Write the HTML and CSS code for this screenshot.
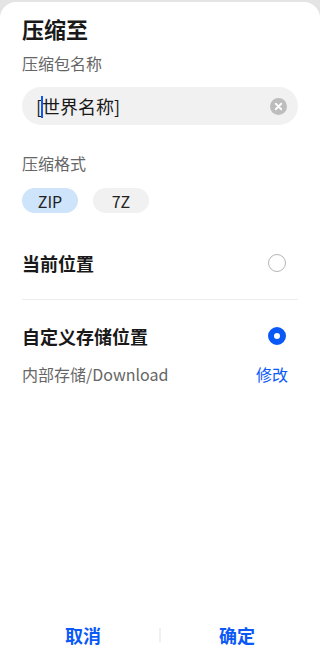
FILE: index.html
```html
<!DOCTYPE html>
<html lang="zh-CN">
<head>
  <meta charset="UTF-8">
  <title>压缩至</title>
  <link rel="stylesheet" href="styles.css">
</head>
<body>
  <div class="sheet">
    <h1 class="title">压缩至</h1>

    <div class="label">压缩包名称</div>
    <div class="name-input">
      <span class="name-text">[世界名称]</span>
      <svg class="clear" width="17" height="17" viewBox="0 0 16 16">
        <circle cx="8" cy="8" r="8" fill="#bdbdbd"/>
        <path d="M5.4 5.4 L10.6 10.6 M10.6 5.4 L5.4 10.6" stroke="#fff" stroke-width="1.7" stroke-linecap="round"/>
      </svg>
      <span class="caret"></span>
    </div>

    <div class="label format-label">压缩格式</div>
    <div class="chips">
      <span class="chip active">ZIP</span>
      <span class="chip">7Z</span>
    </div>

    <div class="option first">
      <span class="option-title">当前位置</span>
      <span class="radio"></span>
    </div>
    <div class="divider"></div>
    <div class="option">
      <span class="option-title">自定义存储位置</span>
      <span class="radio checked"></span>
    </div>
    <div class="path-row">
      <span class="path">内部存储/Download</span>
      <span class="edit">修改</span>
    </div>

    <div class="spacer"></div>

    <div class="actions">
      <button class="action">取消</button>
      <span class="action-divider"></span>
      <button class="action">确定</button>
    </div>
  </div>
</body>
</html>
```

FILE: styles.css
```css
html, body {
  margin: 0;
  padding: 0;
  height: 100%;
}

body {
  font-family: "Noto Sans CJK SC", "Noto Sans", sans-serif;
  background: #e4e4e4;
  padding-top: 2px;
  box-sizing: border-box;
}

.sheet {
  background: white;
  border-radius: 16px 16px 0 0;
  height: 663px;
  box-sizing: border-box;
  padding: 0 22px;
  display: flex;
  flex-direction: column;
}

.title {
  font-size: 22px;
  font-weight: bold;
  color: #191919;
  margin: 11px 0 0;
  line-height: 30px;
}

.label {
  font-size: 16px;
  color: #666;
  margin-top: 9px;
  line-height: 22px;
}

.name-input {
  margin-top: 13px;
  height: 38px;
  border-radius: 19px;
  background: #f1f1f1;
  display: flex;
  align-items: center;
  padding: 0 11px 0 14px;
  position: relative;
}

.caret {
  position: absolute;
  left: 19px;
  top: 9px;
  width: 2px;
  height: 22px;
  background: #0a59f7;
}

.name-text {
  flex: 1;
  font-size: 18px;
  color: #191919;
}

.clear {
  display: block;
}

.format-label {
  margin-top: 27px;
}

.chips {
  display: flex;
  gap: 15px;
  margin-top: 14px;
}

.chip {
  width: 56px;
  height: 25px;
  border-radius: 13px;
  background: #f1f1f1;
  font-size: 16px;
  color: #222;
  display: flex;
  align-items: center;
  justify-content: center;
}

.chip.active {
  background: #cde4fb;
}

.option {
  display: flex;
  align-items: center;
  justify-content: space-between;
  height: 24px;
  margin-top: 24px;
  padding-right: 12px;
}

.option.first {
  margin-top: 38px;
}

.option-title {
  font-size: 18px;
  font-weight: bold;
  color: #191919;
}

.radio {
  width: 18px;
  height: 18px;
  border: 1px solid #b5b5b5;
  border-radius: 50%;
  box-sizing: border-box;
}

.radio.checked {
  border: 6px solid #0a59f7;
}

.divider {
  height: 1px;
  background: #ededed;
  margin-top: 24px;
}

.path-row {
  display: flex;
  justify-content: space-between;
  align-items: center;
  margin-top: 15px;
  line-height: 22px;
}

.path {
  font-size: 16px;
  color: #666;
}

.edit {
  font-size: 16px;
  color: #0a59f7;
  margin-right: 10px;
}

.spacer {
  flex: 1;
}

.actions {
  display: flex;
  align-items: center;
  height: 40px;
  margin: 0 -15px 10px;
}

.action {
  flex: 1;
  border: none;
  background: none;
  font-family: inherit;
  font-size: 18px;
  font-weight: bold;
  color: #0a59f7;
  padding: 0;
}

.action-divider {
  width: 2px;
  height: 14px;
  background: #f0f0f0;
}
```
